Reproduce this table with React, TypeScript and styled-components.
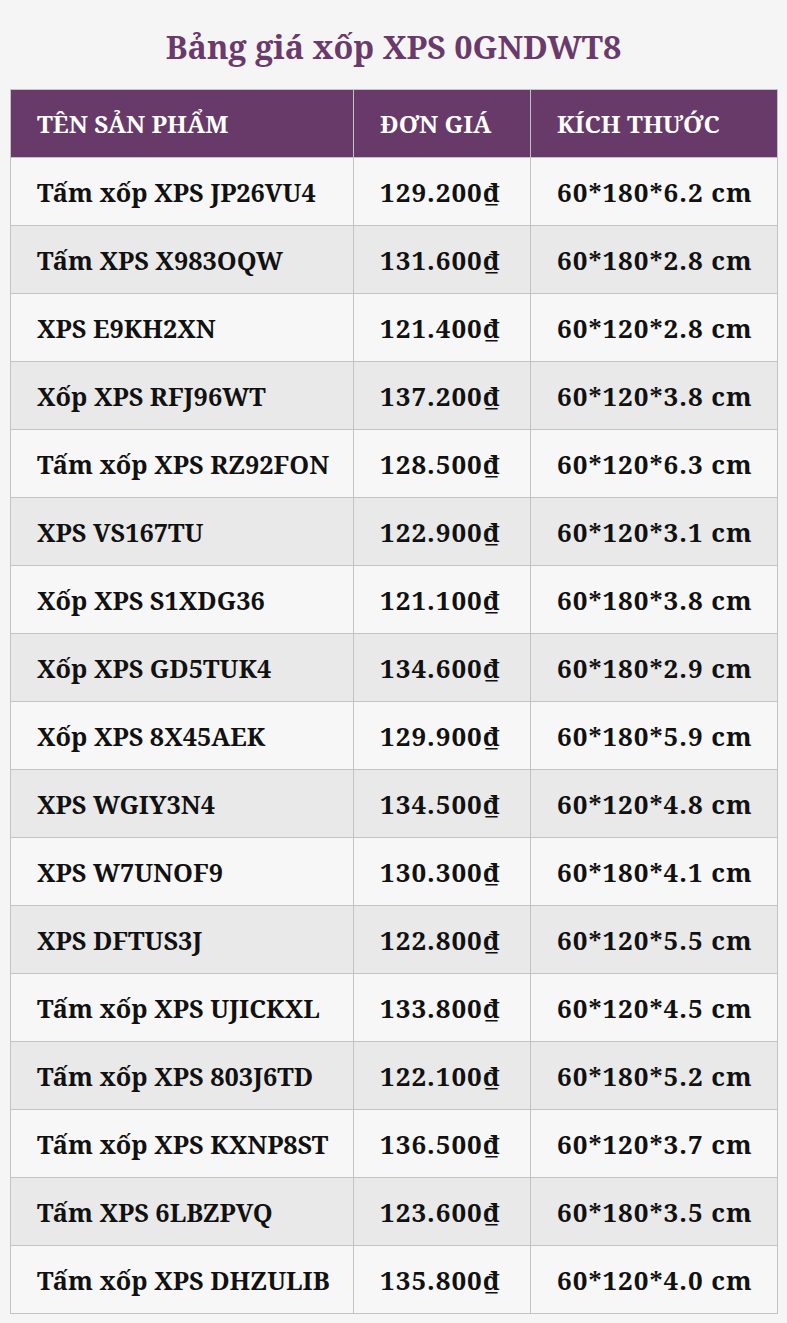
import React from 'react';
import styled, { createGlobalStyle } from 'styled-components';

const GlobalStyle = createGlobalStyle`
  html, body {
    margin: 0;
    padding: 0;
    background: #f5f5f5;
  }
`;

const serif = "'Noto Serif', 'DejaVu Serif Condensed', 'DejaVu Serif', serif";

const Page = styled.div`
  width: 787px;
  padding: 24px 10px 10px;
  box-sizing: border-box;
  font-family: ${serif};
`;

const Title = styled.h1`
  margin: 0 0 21px;
  text-align: center;
  font-family: ${serif};
  font-size: 32.4px;
  line-height: 44px;
  font-weight: bold;
  color: #6b3a6c;
`;

const Table = styled.table`
  width: 767px;
  border-collapse: collapse;
  table-layout: fixed;
`;

const HeadCell = styled.th<{ $w: number }>`
  width: ${(p) => p.$w}px;
  height: 68px;
  padding: 0 0 0 26px;
  box-sizing: border-box;
  text-align: left;
  background: #673a69;
  color: #ffffff;
  border: 1px solid #c3c3c3;
  font-family: ${serif};
  font-size: 24.3px;
  font-weight: bold;
`;

const Row = styled.tr<{ $alt: boolean }>`
  background: ${(p) => (p.$alt ? '#e9e9e9' : '#f7f7f7')};
`;

const Cell = styled.td<{ $numeric?: boolean }>`
  height: 68px;
  padding: 0 0 0 26px;
  box-sizing: border-box;
  border: 1px solid #c3c3c3;
  color: #111111;
  font-family: ${serif};
  font-size: ${(p) => (p.$numeric ? '26px' : '25.3px')};
  font-weight: bold;
  letter-spacing: ${(p) => (p.$numeric ? '1px' : '0')};
  white-space: nowrap;
`;

const rows: [string, string, string][] = [
  ['Tấm xốp XPS JP26VU4', '129.200₫', '60*180*6.2 cm'],
  ['Tấm XPS X983OQW', '131.600₫', '60*180*2.8 cm'],
  ['XPS E9KH2XN', '121.400₫', '60*120*2.8 cm'],
  ['Xốp XPS RFJ96WT', '137.200₫', '60*120*3.8 cm'],
  ['Tấm xốp XPS RZ92FON', '128.500₫', '60*120*6.3 cm'],
  ['XPS VS167TU', '122.900₫', '60*120*3.1 cm'],
  ['Xốp XPS S1XDG36', '121.100₫', '60*180*3.8 cm'],
  ['Xốp XPS GD5TUK4', '134.600₫', '60*180*2.9 cm'],
  ['Xốp XPS 8X45AEK', '129.900₫', '60*180*5.9 cm'],
  ['XPS WGIY3N4', '134.500₫', '60*120*4.8 cm'],
  ['XPS W7UNOF9', '130.300₫', '60*180*4.1 cm'],
  ['XPS DFTUS3J', '122.800₫', '60*120*5.5 cm'],
  ['Tấm xốp XPS UJICKXL', '133.800₫', '60*120*4.5 cm'],
  ['Tấm xốp XPS 803J6TD', '122.100₫', '60*180*5.2 cm'],
  ['Tấm xốp XPS KXNP8ST', '136.500₫', '60*120*3.7 cm'],
  ['Tấm XPS 6LBZPVQ', '123.600₫', '60*180*3.5 cm'],
  ['Tấm xốp XPS DHZULIB', '135.800₫', '60*120*4.0 cm'],
];

export default function App() {
  return (
    <Page>
      <GlobalStyle />
      <Title>Bảng giá xốp XPS 0GNDWT8</Title>
      <Table>
        <thead>
          <tr>
            <HeadCell $w={343}>TÊN SẢN PHẨM</HeadCell>
            <HeadCell $w={177}>ĐƠN GIÁ</HeadCell>
            <HeadCell $w={247}>KÍCH THƯỚC</HeadCell>
          </tr>
        </thead>
        <tbody>
          {rows.map((r, i) => (
            <Row key={r[0]} $alt={i % 2 === 1}>
              <Cell>{r[0]}</Cell>
              <Cell $numeric>{r[1]}</Cell>
              <Cell $numeric>{r[2]}</Cell>
            </Row>
          ))}
        </tbody>
      </Table>
    </Page>
  );
}
